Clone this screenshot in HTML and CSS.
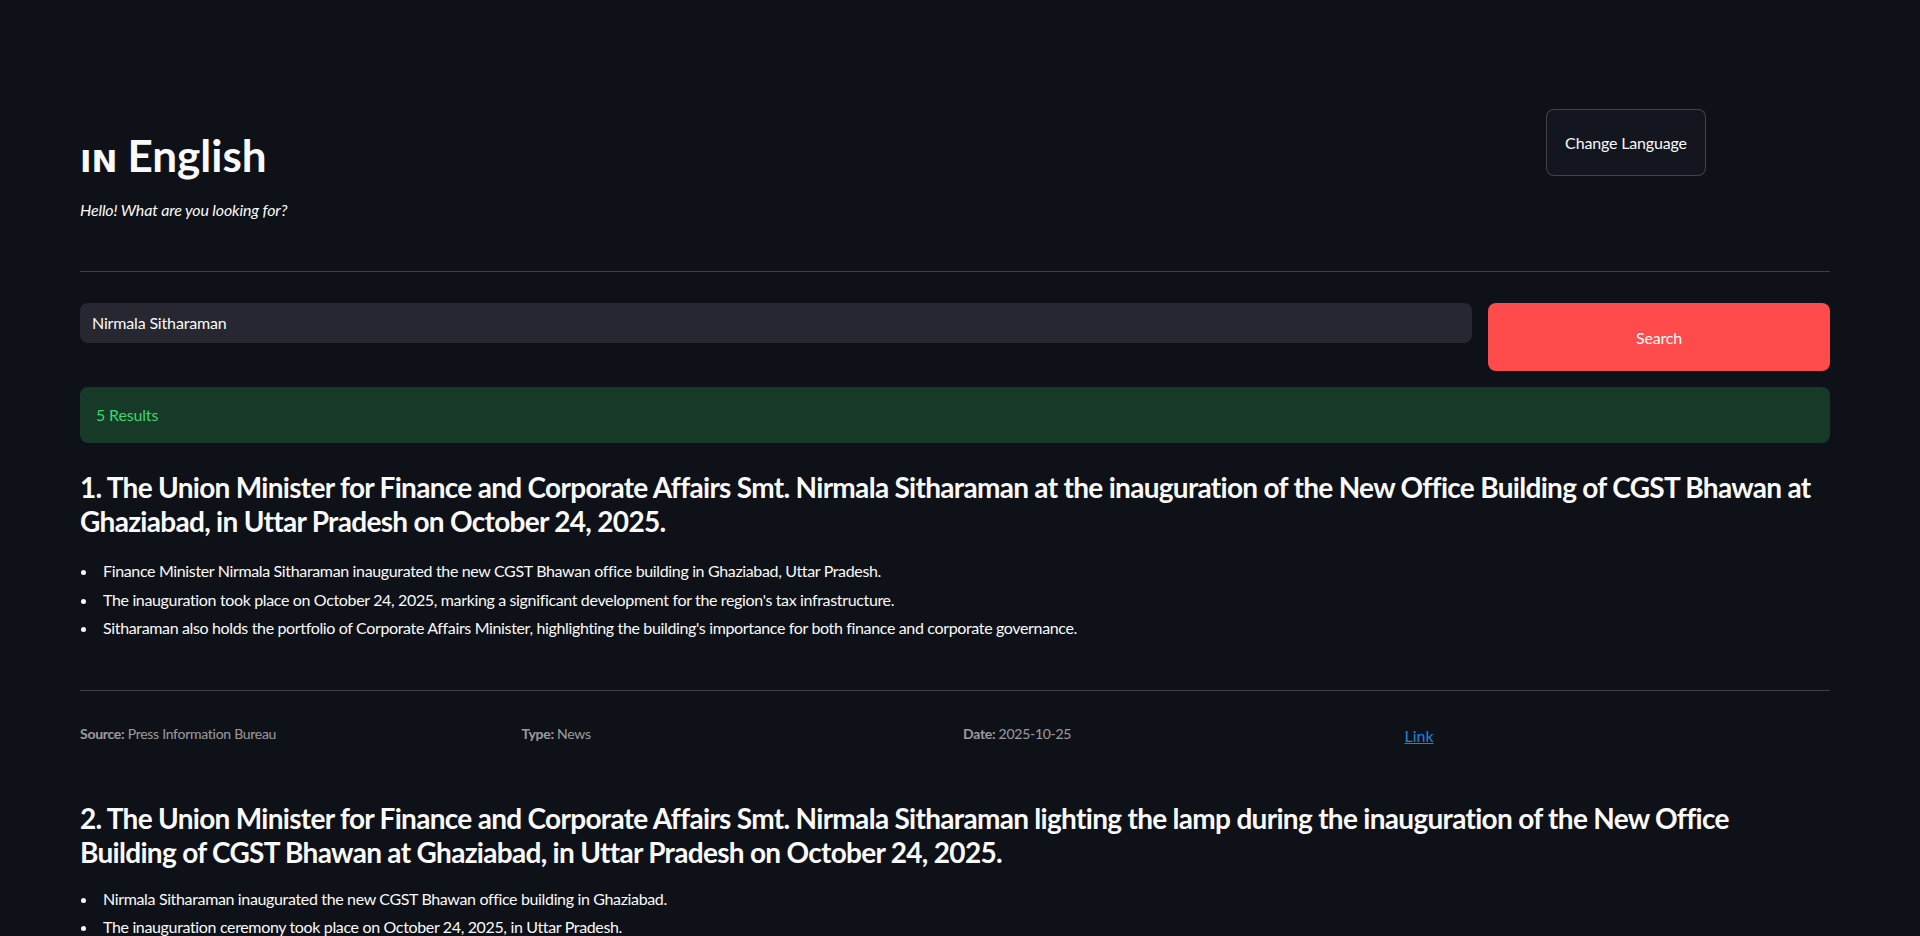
FILE: index.html
```html
<!DOCTYPE html>
<html lang="en">
<head>
<meta charset="utf-8">
<title>English News Search</title>
<link rel="stylesheet" href="styles.css">
</head>
<body>
<main class="main">
  <section class="header-row">
    <div class="title-col">
      <h1 class="title"><span class="flag">IN</span> English</h1>
      <p class="subtitle">Hello! What are you looking for?</p>
    </div>
    <div class="btn-col">
      <button class="btn-secondary">Change Language</button>
    </div>
  </section>

  <hr class="divider top-divider">

  <section class="search-row">
    <div class="input-box">Nirmala Sitharaman</div>
    <button class="btn-primary">Search</button>
  </section>

  <div class="success">5 Results</div>

  <article class="result">
    <h3 class="result-title">1. The Union Minister for Finance and Corporate Affairs Smt. Nirmala Sitharaman at the inauguration of the New Office Building of CGST Bhawan at Ghaziabad, in Uttar Pradesh on October 24, 2025.</h3>
    <ul class="points">
      <li>Finance Minister Nirmala Sitharaman inaugurated the new CGST Bhawan office building in Ghaziabad, Uttar Pradesh.</li>
      <li>The inauguration took place on October 24, 2025, marking a significant development for the region's tax infrastructure.</li>
      <li>Sitharaman also holds the portfolio of Corporate Affairs Minister, highlighting the building's importance for both finance and corporate governance.</li>
    </ul>
    <hr class="divider result-divider">
    <div class="meta">
      <div class="meta-item"><b>Source:</b> Press Information Bureau</div>
      <div class="meta-item"><b>Type:</b> News</div>
      <div class="meta-item"><b>Date:</b> 2025-10-25</div>
      <div class="meta-link"><a href="#">Link</a></div>
    </div>
  </article>

  <article class="result second">
    <h3 class="result-title">2. The Union Minister for Finance and Corporate Affairs Smt. Nirmala Sitharaman lighting the lamp during the inauguration of the New Office Building of CGST Bhawan at Ghaziabad, in Uttar Pradesh on October 24, 2025.</h3>
    <ul class="points">
      <li>Nirmala Sitharaman inaugurated the new CGST Bhawan office building in Ghaziabad.</li>
      <li>The inauguration ceremony took place on October 24, 2025, in Uttar Pradesh.</li>
      <li>The new building is expected to improve tax administration in the region.</li>
    </ul>
  </article>
</main>
</body>
</html>
```

FILE: styles.css
```css
* { box-sizing: border-box; }

html, body {
  margin: 0;
  padding: 0;
  background: #0e1117;
  color: #fafafa;
  font-family: "Lato", "Noto Sans", sans-serif;
  overflow: hidden;
}

.main {
  width: 1920px;
  padding: 109px 90px 0 80px;
}

.header-row {
  display: grid;
  grid-template-columns: 1450px 284px;
  column-gap: 16px;
  align-items: start;
}

.title-col {
  padding-top: 20px;
}

.title {
  margin: 0;
  font-size: 44px;
  line-height: 53px;
  font-weight: 700;
  display: flex;
  align-items: baseline;
  gap: 10px;
}

.flag {
  font-family: "DejaVu Sans", sans-serif;
  font-size: 31px;
  font-weight: 700;
}

.subtitle {
  margin: 10px 0 0;
  font-size: 16px;
  line-height: 24px;
  font-style: italic;
  letter-spacing: -0.01em;
}

.btn-secondary {
  width: 160px;
  height: 67px;
  background: #13161e;
  color: #fafafa;
  border: 1px solid rgba(250, 250, 250, 0.2);
  border-radius: 8px;
  font-family: inherit;
  font-size: 16px;
  letter-spacing: -0.01em;
  padding: 0 12px;
}

.divider {
  border: 0;
  height: 1px;
  background: rgba(250, 250, 250, 0.2);
  margin: 0;
}

.top-divider {
  margin-top: 49px;
}

.search-row {
  display: grid;
  grid-template-columns: 1392px 342px;
  column-gap: 16px;
  align-items: start;
  margin-top: 31px;
}

.input-box {
  height: 40px;
  background: #262730;
  border-radius: 8px;
  padding: 0 12px;
  font-size: 16px;
  line-height: 40px;
  color: #fafafa;
  letter-spacing: -0.01em;
}

.btn-primary {
  height: 68px;
  background: #ff4b4b;
  color: #fff;
  border: 0;
  border-radius: 8px;
  font-family: inherit;
  font-size: 16px;
  letter-spacing: -0.01em;
}

.success {
  margin-top: 16px;
  height: 56px;
  border-radius: 8px;
  background: #173928;
  color: #3dd56d;
  font-size: 16px;
  line-height: 56px;
  padding: 0 16px;
  letter-spacing: -0.01em;
}

.result-title {
  margin: 27px 0 0;
  font-size: 28px;
  line-height: 34px;
  font-weight: 700;
  letter-spacing: -0.7px;
}

.second .result-title {
  margin-top: 53px;
}

.points {
  margin: 20px 0 0;
  padding-left: 18px;
  font-size: 16px;
  line-height: 25.6px;
  letter-spacing: -0.022em;
}

.second .points {
  margin-top: 17px;
}

.points li {
  margin-bottom: 3px;
  padding-left: 5px;
}

.result-divider {
  margin-top: 49px;
}

.meta {
  display: grid;
  grid-template-columns: repeat(4, 1fr);
  column-gap: 16px;
  margin-top: 32px;
}

.meta-item {
  font-size: 14px;
  line-height: 21px;
  color: rgba(250, 250, 250, 0.6);
  letter-spacing: -0.02em;
}

.meta-item b {
  font-weight: 700;
}

.meta-link {
  font-size: 16px;
  line-height: 24px;
  padding-top: 1px;
}

.meta-link a {
  color: #1c83e1;
  text-decoration: underline;
}
```
